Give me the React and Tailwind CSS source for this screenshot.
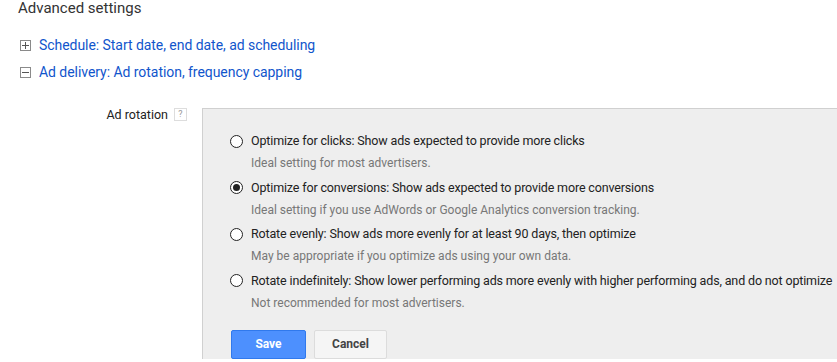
import React, { useState } from 'react';

const options = [
  {
    id: 'clicks',
    label: 'Optimize for clicks: Show ads expected to provide more clicks',
    hint: 'Ideal setting for most advertisers.',
  },
  {
    id: 'conversions',
    label: 'Optimize for conversions: Show ads expected to provide more conversions',
    hint: 'Ideal setting if you use AdWords or Google Analytics conversion tracking.',
  },
  {
    id: 'evenly',
    label: 'Rotate evenly: Show ads more evenly for at least 90 days, then optimize',
    hint: 'May be appropriate if you optimize ads using your own data.',
  },
  {
    id: 'indefinitely',
    label: 'Rotate indefinitely: Show lower performing ads more evenly with higher performing ads, and do not optimize',
    hint: 'Not recommended for most advertisers.',
  },
];

function ToggleBox({ open }) {
  return (
    <span className="flex h-[11px] w-[11px] items-center justify-center border border-[#8a8a8a] bg-white">
      <svg width="7" height="7" viewBox="0 0 7 7">
        <rect x="0" y="3" width="7" height="1" fill="#555" />
        {!open && <rect x="3" y="0" width="1" height="7" fill="#555" />}
      </svg>
    </span>
  );
}

function Radio({ checked }) {
  return (
    <span className="flex h-[13px] w-[13px] shrink-0 items-center justify-center rounded-full border-[1.5px] border-[#222] bg-white">
      {checked && <span className="h-[7px] w-[7px] rounded-full bg-[#222]" />}
    </span>
  );
}

export default function App() {
  const [rotation, setRotation] = useState('conversions');

  return (
    <div className="h-[362px] w-[837px] overflow-hidden bg-white font-['Roboto',sans-serif]">
      <h2 className="pl-[18px] pt-0 text-[15px] leading-[17px] text-[#333]">Advanced settings</h2>

      <div className="mt-[20px] flex flex-col gap-[10px] pl-[20px]">
        <a className="flex items-center gap-[8px] text-[14px] leading-[17px] tracking-[-0.05px] text-[#15c]" href="#">
          <ToggleBox open={false} />
          Schedule: Start date, end date, ad scheduling
        </a>
        <a className="flex items-center gap-[8px] text-[14px] leading-[17px] tracking-[-0.05px] text-[#15c]" href="#">
          <ToggleBox open />
          Ad delivery: Ad rotation, frequency capping
        </a>
      </div>

      <div className="mt-[27px] flex">
        <div className="flex w-[202px] shrink-0 items-start justify-end gap-[6px] pr-[15px]">
          <span className="text-[12.5px] leading-[14px] text-[#222]">Ad rotation</span>
          <span className="flex h-[13px] w-[13px] items-center justify-center border border-[#ddd] text-[9px] leading-none text-[#999]">
            ?
          </span>
        </div>

        <div className="flex-1 border-l border-t border-[#d0d0d0] bg-[#eeeeee] pl-[27px] pt-[24px]">
          <div className="flex flex-col gap-[8.5px]">
            {options.map((o) => (
              <label key={o.id} className="flex cursor-pointer flex-col" onClick={() => setRotation(o.id)}>
                <span className="flex items-center gap-[8px] whitespace-nowrap text-[12.5px] leading-[16px] tracking-[-0.15px] text-[#222]">
                  <Radio checked={rotation === o.id} />
                  {o.label}
                </span>
                <span className="mt-[6px] pl-[21px] text-[12px] leading-[16px] text-[#777]">{o.hint}</span>
              </label>
            ))}
          </div>

          <div className="mt-[19px] flex gap-[8px] pl-[1px]">
            <button className="h-[29px] w-[75px] rounded-[2px] border border-[#3079ed] bg-[#4d90fe] text-[12px] font-bold text-white">
              Save
            </button>
            <button className="h-[29px] w-[73px] rounded-[2px] border border-[#dcdcdc] bg-[#f5f5f5] text-[12px] font-bold text-[#444]">
              Cancel
            </button>
          </div>
        </div>
      </div>
    </div>
  );
}
